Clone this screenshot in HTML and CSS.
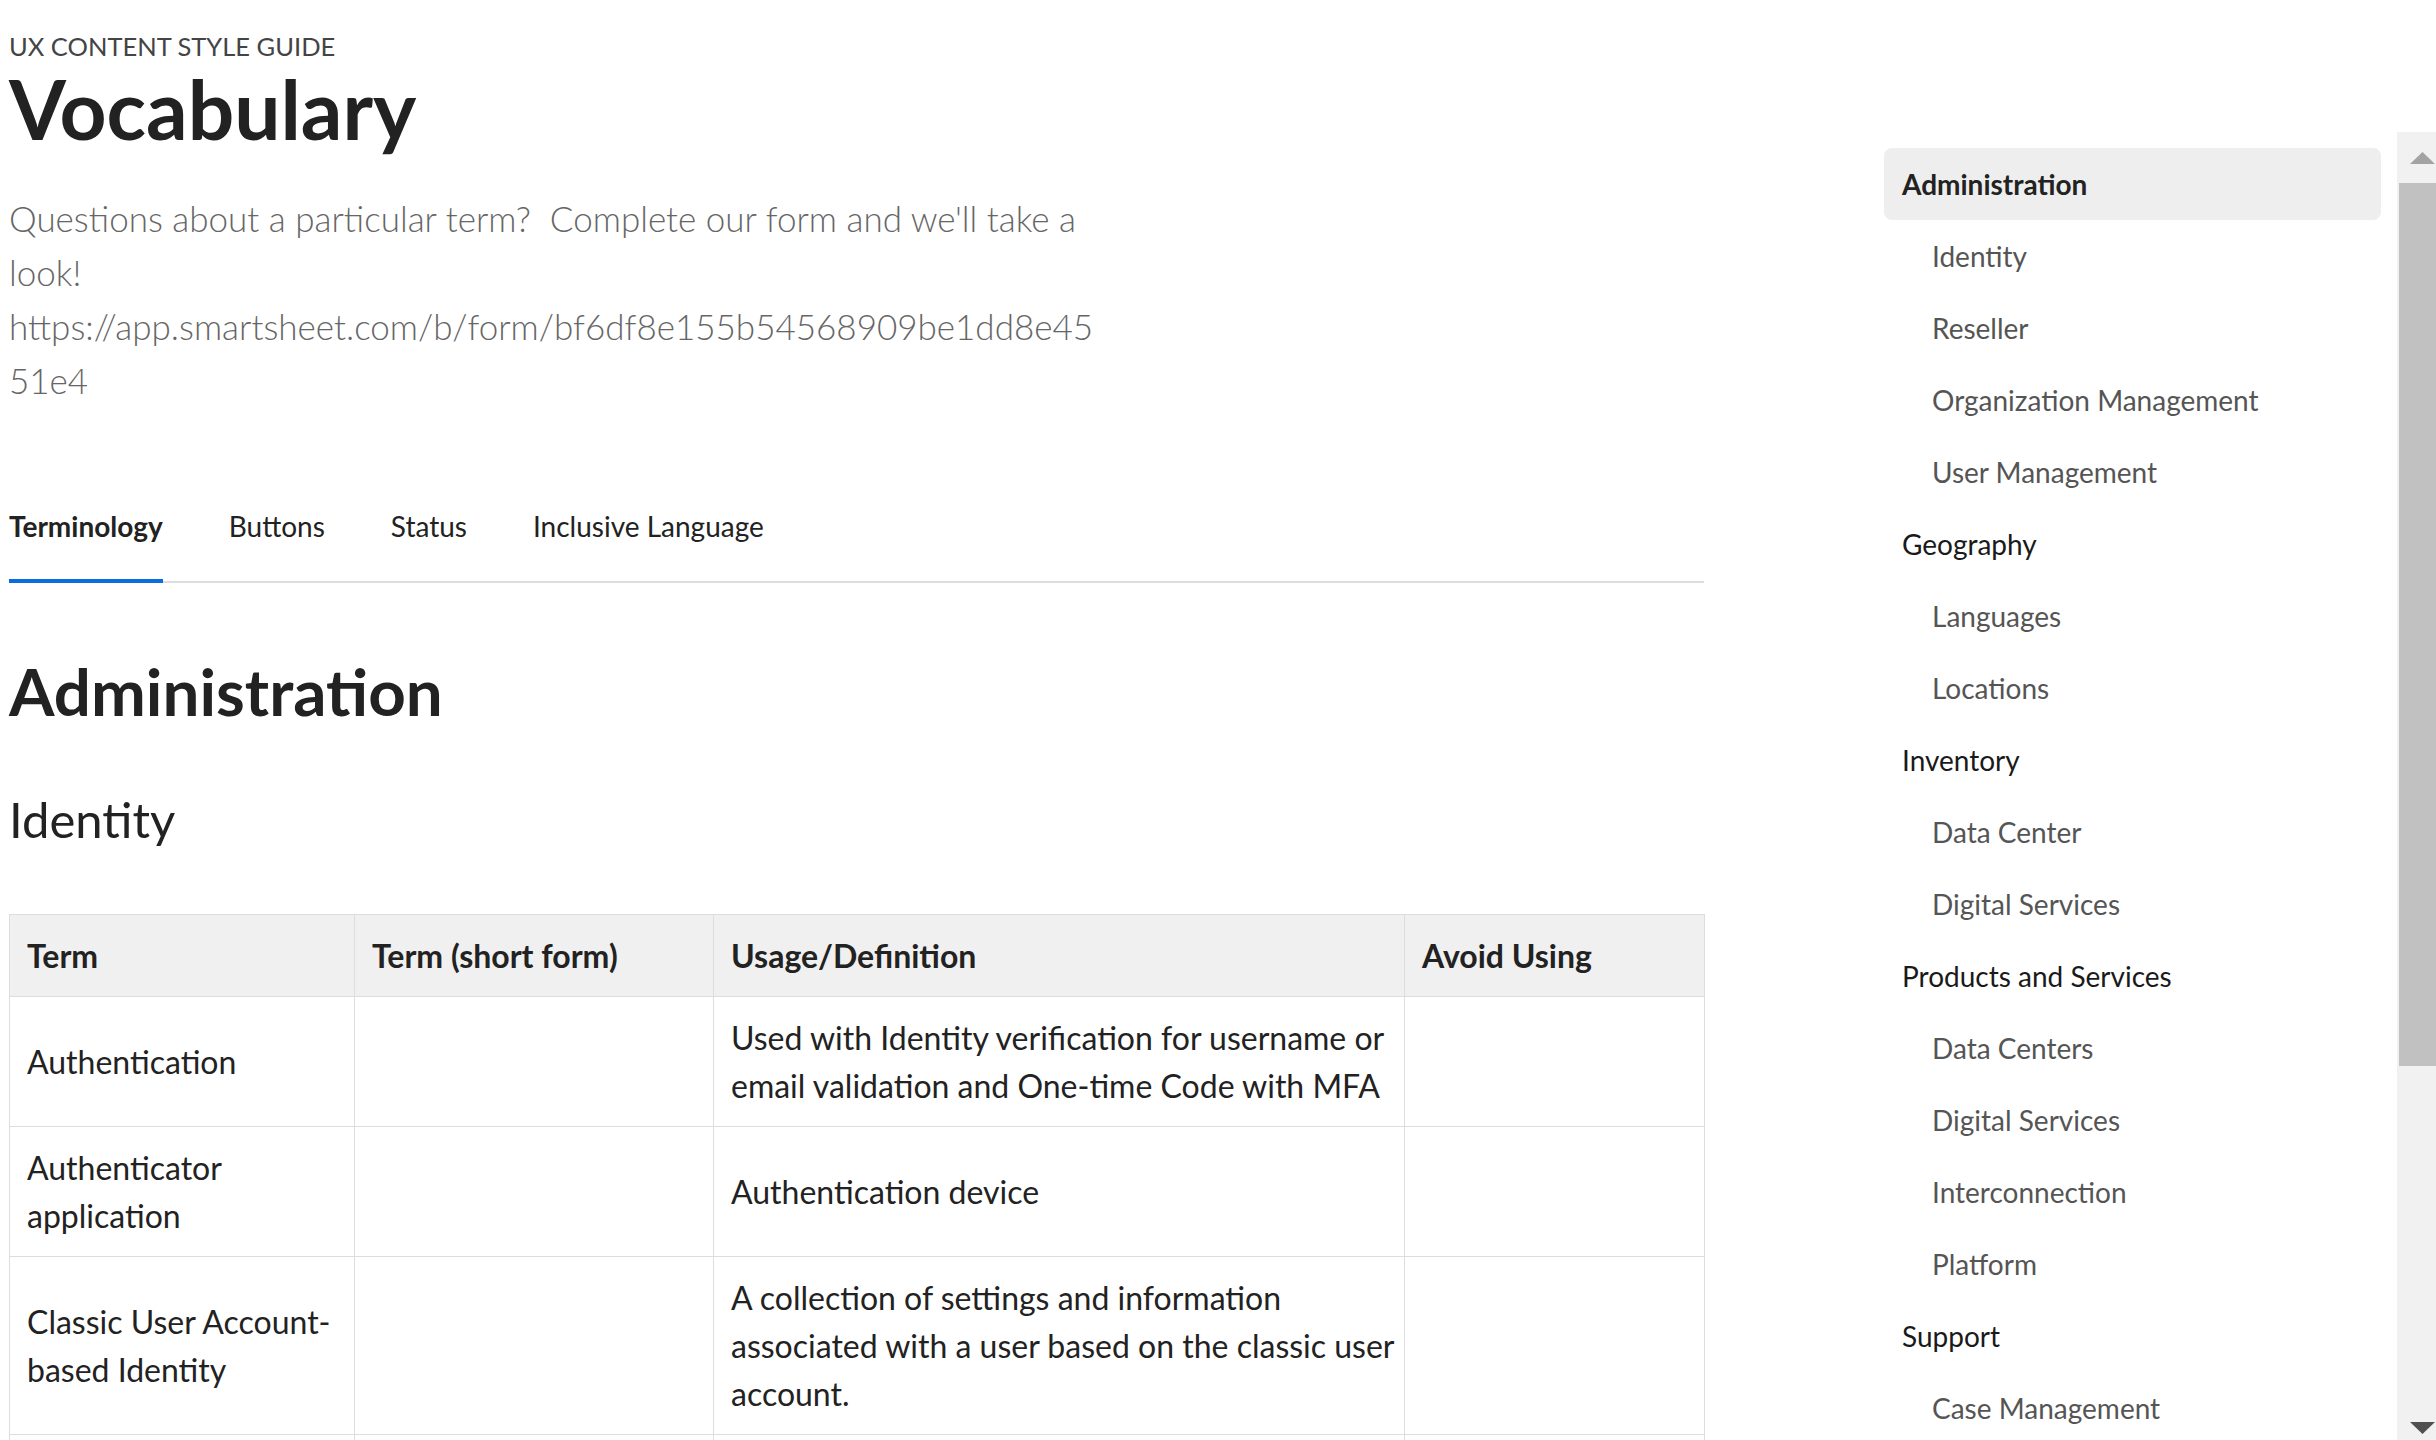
FILE: index.html
```html
<!DOCTYPE html>
<html lang="en">
<head>
    <meta charset="UTF-8">
    <meta name="viewport" content="width=device-width, initial-scale=1.0">
    <title>Vocabulary - UX Content Style Guide</title>
    <link rel="stylesheet" href="styles.css">
</head>
<body>
    <div class="page">
        <main class="content">
            <p class="eyebrow">UX CONTENT STYLE GUIDE</p>
            <h1 class="page-title">Vocabulary</h1>
            <p class="intro">Questions about a particular term?&nbsp; Complete our form and we'll take a look! https://app.smartsheet.com/b/form/bf6df8e155b54568909be1dd8e4551e4</p>

            <nav class="tabs">
                <a class="tab active">Terminology</a>
                <a class="tab">Buttons</a>
                <a class="tab">Status</a>
                <a class="tab">Inclusive Language</a>
            </nav>

            <h2 class="section-title">Administration</h2>
            <h3 class="group-title">Identity</h3>

            <table class="terms">
                <colgroup>
                    <col class="col-term">
                    <col class="col-short">
                    <col class="col-usage">
                    <col class="col-avoid">
                </colgroup>
                <thead>
                    <tr>
                        <th>Term</th>
                        <th>Term (short form)</th>
                        <th>Usage/Definition</th>
                        <th>Avoid Using</th>
                    </tr>
                </thead>
                <tbody>
                    <tr>
                        <td>Authentication</td>
                        <td></td>
                        <td>Used with Identity verification for username or email validation and One-time Code with MFA</td>
                        <td></td>
                    </tr>
                    <tr>
                        <td>Authenticator application</td>
                        <td></td>
                        <td>Authentication device</td>
                        <td></td>
                    </tr>
                    <tr>
                        <td>Classic User Account-based Identity</td>
                        <td></td>
                        <td>A collection of settings and information associated with a user based on the classic user account.</td>
                        <td></td>
                    </tr>
                    <tr>
                        <td>&nbsp;</td>
                        <td></td>
                        <td></td>
                        <td></td>
                    </tr>
                </tbody>
            </table>
        </main>

        <aside class="sidebar">
            <ul class="toc">
                <li class="toc-item active">Administration</li>
                <li class="toc-item sub">Identity</li>
                <li class="toc-item sub">Reseller</li>
                <li class="toc-item sub">Organization Management</li>
                <li class="toc-item sub">User Management</li>
                <li class="toc-item">Geography</li>
                <li class="toc-item sub">Languages</li>
                <li class="toc-item sub">Locations</li>
                <li class="toc-item">Inventory</li>
                <li class="toc-item sub">Data Center</li>
                <li class="toc-item sub">Digital Services</li>
                <li class="toc-item">Products and Services</li>
                <li class="toc-item sub">Data Centers</li>
                <li class="toc-item sub">Digital Services</li>
                <li class="toc-item sub">Interconnection</li>
                <li class="toc-item sub">Platform</li>
                <li class="toc-item">Support</li>
                <li class="toc-item sub">Case Management</li>
            </ul>

            <!-- fake scrollbar for the sidebar panel -->
            <div class="scrollbar">
                <div class="scroll-btn up">
                    <svg width="25" height="12" viewBox="0 0 25 12"><polygon points="12.5,0 25,12 0,12" fill="#a3a3a3"/></svg>
                </div>
                <div class="scroll-thumb"></div>
                <div class="scroll-rest"></div>
                <div class="scroll-btn down">
                    <svg width="25" height="12" viewBox="0 0 25 12"><polygon points="0,0 25,0 12.5,12" fill="#505050"/></svg>
                </div>
            </div>
        </aside>
    </div>
</body>
</html>
```

FILE: styles.css
```css
:root {
    --text: #222222;
    --muted: #666666;
    --sub: #555555;
    --border: #dddddd;
    --accent: #0a6ce0;
}

* {
    box-sizing: border-box;
}

html, body {
    margin: 0;
    height: 100%;
}

body {
    background: #ffffff;
    font-family: Lato, 'Open Sans', sans-serif;
    color: var(--text);
    overflow: hidden;
}

.page {
    display: grid;
    grid-template-columns: 1695px 1fr;
    height: 100vh;
    padding-left: 9px;
    overflow: hidden;
}

.content {
    min-width: 0;
}

.eyebrow {
    margin: 28px 0 0;
    font-size: 25.5px;
    line-height: 36px;
    color: #444444;
}

.page-title {
    margin: 0;
    font-size: 82px;
    line-height: 88px;
    font-weight: 700;
    color: var(--text);
}

.intro {
    margin: 39px 0 0;
    max-width: 1100px;
    font-size: 35px;
    line-height: 54px;
    font-weight: 300;
    color: var(--muted);
    overflow-wrap: break-word;
}

.tabs {
    display: flex;
    gap: 66px;
    margin-top: 82px;
    border-bottom: 2px solid #dddddd;
}

.tab {
    padding: 16px 0 32px;
    margin-bottom: -2px;
    font-size: 28px;
    line-height: 42px;
    color: var(--text);
    border-bottom: 4px solid transparent;
    cursor: pointer;
}

.tab.active {
    font-weight: 700;
    border-bottom-color: var(--accent);
}

.section-title {
    margin: 69px 0 0;
    font-size: 65.5px;
    line-height: 77px;
    font-weight: 700;
}

.group-title {
    margin: 61px 0 0;
    font-size: 49px;
    line-height: 58px;
    font-weight: 400;
}

.terms {
    margin-top: 66px;
    width: 1695px;
    table-layout: fixed;
    border-collapse: collapse;
    font-size: 32px;
    line-height: 48px;
}

.col-term { width: 345px; }
.col-short { width: 359px; }
.col-usage { width: 691px; }
.col-avoid { width: 300px; }

.terms th,
.terms td {
    padding: 16px 2px 16px 17px;
    border: 1px solid var(--border);
    text-align: left;
    vertical-align: middle;
}

.terms th {
    background: #f0f0f0;
    font-weight: 700;
    padding-top: 17px;
}

.terms tbody td {
    padding-top: 17px;
}

/* sidebar */

.sidebar {
    display: flex;
    margin-top: 132px;
    height: 1308px;
    padding-left: 180px;
    overflow: hidden;
}

.toc {
    list-style: none;
    margin: 0 16px 0 0;
    padding: 16px 0 0;
    width: 497px;
    overflow: hidden;
}

.toc-item {
    padding: 15px 16px 15px 18px;
    font-size: 28px;
    line-height: 42px;
    color: #1a1a1a;
    border-radius: 8px;
}

.toc-item.sub {
    padding-left: 48px;
    color: var(--sub);
}

.toc-item.active {
    background: #eeeeee;
    font-weight: 700;
    color: var(--text);
}

.scrollbar {
    display: flex;
    flex-direction: column;
    width: 39px;
    flex-shrink: 0;
    background: #f1f1f1;
}

.scroll-btn {
    height: 51px;
    padding-left: 13px;
}

.scroll-btn svg {
    display: block;
}

.scroll-btn.up {
    padding-top: 20px;
}

.scroll-btn.down {
    padding-top: 33px;
}

.scroll-thumb {
    height: 883px;
    margin-left: 2px;
    background: #c1c1c1;
}

.scroll-rest {
    flex: 1;
}
```
